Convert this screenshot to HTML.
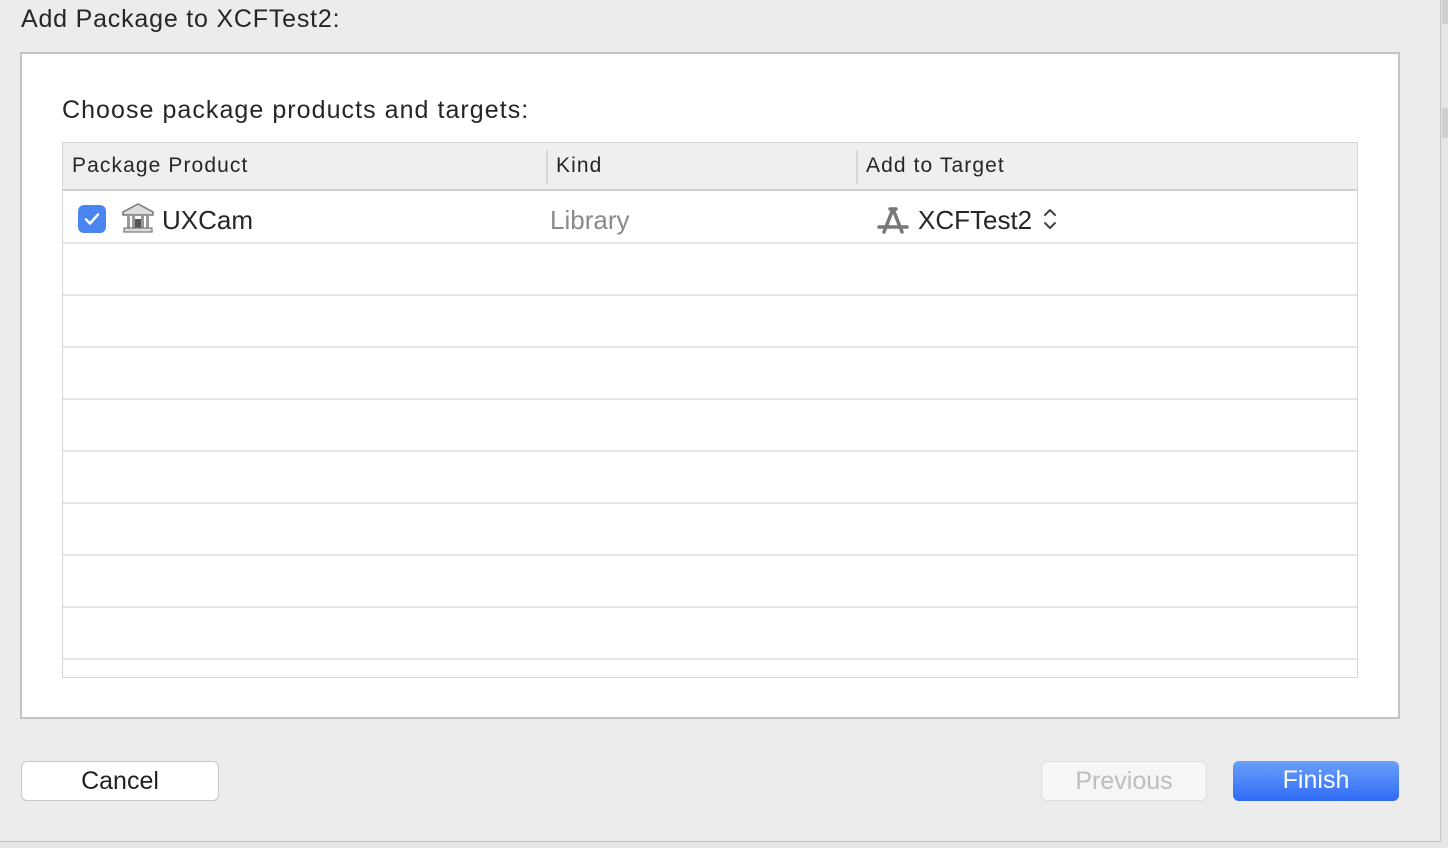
<!DOCTYPE html>
<html><head><style>
*{margin:0;padding:0;box-sizing:border-box}
body{width:1448px;height:848px;background:#e6e6e6;font-family:"Liberation Sans",sans-serif;position:relative;overflow:hidden}
.dlg{position:absolute;left:0;top:0;width:1441px;height:842px;background:#ececec;border-right:1px solid #c4c4c4;border-bottom:1px solid #c0c0c0}
.t{position:absolute;left:21px;top:5px;font-size:25px;letter-spacing:0.8px;color:#262626}
.box{position:absolute;left:20px;top:52px;width:1380px;height:667px;background:#fff;border:2px solid #c4c4c4}
.sub{position:absolute;left:62px;top:96px;font-size:25px;letter-spacing:1.05px;color:#262626}
.tbl{position:absolute;left:62px;top:142px;width:1296px;height:536px;border:1px solid #d6d6d6;background:#fff}
.hdr{position:absolute;left:0;top:0;width:100%;height:48px;background:#efefef;border-bottom:2px solid #d0d0d0;font-size:21px;letter-spacing:1.1px;color:#262626}
.hdr span{position:absolute;top:11px}
.sep{position:absolute;top:7px;width:2px;height:34px;background:#d8d8d8}
.row{position:absolute;left:0;width:100%;height:2px;background:#e5e5e5}
.btn{position:absolute;top:761px;height:40px;border-radius:6px;font-size:25px;text-align:center;line-height:38px}
.side{position:absolute;left:1442px;width:6px;background:#d6d6d6}
</style></head><body>
<div class="side" style="top:0;height:24px;background:#d0d0d0"></div>
<div class="side" style="top:108px;height:30px;background:#d0d0d0"></div>
<div class="dlg">
<div class="t">Add Package to XCFTest2:</div>
<div class="box"></div>
<div class="sub">Choose package products and targets:</div>
<div class="tbl">
<div class="hdr"><span style="left:9px">Package Product</span><div class="sep" style="left:483px"></div><span style="left:493px">Kind</span><div class="sep" style="left:793px"></div><span style="left:803px">Add to Target</span></div>
<div class="row" style="top:99px"></div><div class="row" style="top:151px"></div><div class="row" style="top:203px"></div><div class="row" style="top:255px"></div><div class="row" style="top:307px"></div><div class="row" style="top:359px"></div><div class="row" style="top:411px"></div><div class="row" style="top:463px"></div><div class="row" style="top:515px"></div>
<div style="position:absolute;left:15px;top:62px;width:28px;height:28px;border-radius:6px;background:#4b86f0"><svg width="28" height="28"><path d="M8 14.5l4 4 8-9" stroke="#fff" stroke-width="2.5" fill="none" stroke-linecap="round" stroke-linejoin="round"/></svg></div>
<svg style="position:absolute;left:58px;top:59px" width="34" height="32"><path d="M17 2L2 10v3h30v-3z" fill="#ddd" stroke="#777" stroke-width="1.5"/><rect x="6" y="14" width="3" height="12" fill="#999"/><rect x="11" y="14" width="3" height="12" fill="#999"/><rect x="20" y="14" width="3" height="12" fill="#999"/><rect x="25" y="14" width="3" height="12" fill="#999"/><rect x="14" y="17" width="6" height="9" fill="#555"/><rect x="3" y="26" width="28" height="4" fill="#ddd" stroke="#777" stroke-width="1.2"/></svg>
<span style="position:absolute;left:99px;top:62px;font-size:26px;color:#262626">UXCam</span>
<span style="position:absolute;left:487px;top:62px;font-size:26px;color:#8a8a8a">Library</span>
<svg style="position:absolute;left:813px;top:61px" width="34" height="32"><path d="M17 5L8 28M17 5l9 23M3 23h28M14 5h6" stroke="#777" stroke-width="3.5" stroke-linecap="round" fill="none"/></svg>
<span style="position:absolute;left:855px;top:62px;font-size:26px;color:#262626">XCFTest2</span>
<svg style="position:absolute;left:979px;top:63px" width="16" height="26"><path d="M3 9l5-5 5 5M3 17l5 5 5-5" stroke="#444" stroke-width="2" fill="none" stroke-linecap="round" stroke-linejoin="round"/></svg>
</div>
<div class="btn" style="left:21px;width:198px;background:#fff;border:1px solid #c8c8c8;color:#222">Cancel</div>
<div class="btn" style="left:1041px;width:166px;background:#f6f6f6;border:1px solid #dcdcdc;color:#bdbdbd">Previous</div>
<div class="btn" style="left:1233px;width:166px;background:linear-gradient(#6b9ff8,#2e6bf6);color:#fff">Finish</div>
</div>
</body></html>
